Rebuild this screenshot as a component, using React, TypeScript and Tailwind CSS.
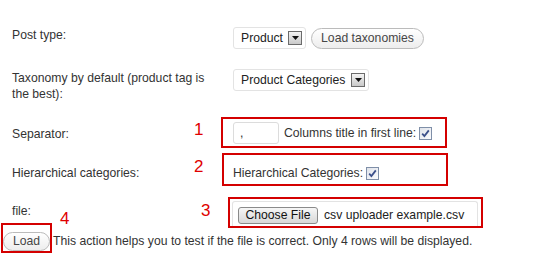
import React from "react";

function SelectBox({ label, width }: { label: string; width: string }) {
    return (
        <div className={`flex items-center justify-between h-[22px] ${width} border border-[#e3e3e3] rounded-[3px] bg-white pl-[7px] pr-[3px]`}>
            <span className="text-[#222] leading-none">{label}</span>
            <span className="flex items-center justify-center w-[14px] h-[14px] border border-[#6b6b6b] bg-gradient-to-b from-[#f4f4f4] to-[#c9c9c9]">
                <svg width="7" height="4" viewBox="0 0 7 4">
                    <path d="M0 0 H7 L3.5 4 Z" fill="#111" />
                </svg>
            </span>
        </div>
    );
}

function CheckBox() {
    return (
        <span className="inline-flex items-center justify-center w-[13px] h-[13px] border border-[#7f8fa8] bg-gradient-to-br from-[#dfe3ea] to-[#fbfbfd]">
            <svg width="9" height="9" viewBox="0 0 9 9">
                <path d="M1.2 4.6 L3.4 7 L7.8 1.4" stroke="#3b4f8a" strokeWidth="1.8" fill="none" />
            </svg>
        </span>
    );
}

function PillButton({ children, className }: { children: React.ReactNode; className?: string }) {
    return (
        <button className={`flex items-center justify-center rounded-full border border-[#bbb] bg-gradient-to-b from-white to-[#ededed] text-[#464646] leading-none ${className ?? ""}`}>
            {children}
        </button>
    );
}

export default function App() {
    return (
        <div className="relative w-[542px] h-[255px] bg-white text-[12.2px] text-[#333] overflow-hidden" style={{ fontFamily: '"Liberation Sans", Arial, sans-serif' }}>
            <div className="flex flex-col pt-[27px]">
                {/* post type */}
                <div className="flex h-[22px]">
                    <div className="w-[233px] pl-[12px] leading-[16px]">Post type:</div>
                    <div className="flex items-center gap-[5px]">
                        <SelectBox label="Product" width="w-[73px]" />
                        <PillButton className="w-[113px] h-[21px]">Load taxonomies</PillButton>
                    </div>
                </div>

                {/* taxonomy */}
                <div className="flex mt-[20px] h-[32px]">
                    <div className="w-[233px] pl-[12px] pt-[1px] leading-[16px] whitespace-nowrap">
                        Taxonomy by default (product tag is<br />the best):
                    </div>
                    <SelectBox label="Product Categories" width="w-[136px]" />
                </div>

                {/* separator */}
                <div className="flex mt-[21px] h-[22px]">
                    <div className="w-[233px] pl-[12px] pt-[4px] leading-[16px]">Separator:</div>
                    <div className="flex items-center">
                        <div className="w-[46px] h-[22px] border border-[#dcdcdc] rounded-[3px] bg-white pl-[6px] leading-[20px]">,</div>
                        <span className="ml-[5px] mr-[3px]">Columns title in first line:</span>
                        <CheckBox />
                    </div>
                </div>

                {/* hierarchical */}
                <div className="flex mt-[21px] h-[16px]">
                    <div className="w-[233px] pl-[12px] leading-[16px]">Hierarchical categories:</div>
                    <div className="flex items-center">
                        <span className="mr-[3px]">Hierarchical Categories:</span>
                        <CheckBox />
                    </div>
                </div>

                {/* file */}
                <div className="flex mt-[20px] h-[27px]">
                    <div className="w-[232px] pl-[12px] pt-[2px] leading-[16px]">file:</div>
                    <div className="flex items-center w-[246px] h-[27px] border border-[#e3e3e3] border-b-0 rounded-t-[3px] pl-[5px]">
                        <button className="h-[17px] w-[80px] border border-[#8a8a8a] rounded-[3px] bg-gradient-to-b from-[#f6f6f6] to-[#d8d8d8] text-[#111] text-[12.2px] leading-none">
                            Choose File
                        </button>
                        <span className="ml-[6px] text-[#222]">csv uploader example.csv</span>
                    </div>
                </div>

                {/* load */}
                <div className="flex items-center mt-[4px] h-[19px] pl-[3px]">
                    <PillButton className="w-[47px] h-[19px]">Load</PillButton>
                    <span className="ml-[3px] whitespace-nowrap">This action helps you to test if the file is correct. Only 4 rows will be displayed.</span>
                </div>
            </div>

            {/* annotations */}
            <div className="absolute left-[221px] top-[117px] w-[226px] h-[31px] border-2 border-[#d40000]" />
            <div className="absolute left-[222px] top-[153px] w-[226px] h-[33px] border-2 border-[#d40000]" />
            <div className="absolute left-[228px] top-[197px] w-[255px] h-[31px] border-2 border-[#d40000]" />
            <div className="absolute left-[1px] top-[223px] w-[51px] h-[30px] border-2 border-[#d40000]" />
            <span className="absolute left-[194px] top-[121px] text-[17px] leading-[18px] text-[#e00000]">1</span>
            <span className="absolute left-[194px] top-[158px] text-[17px] leading-[18px] text-[#e00000]">2</span>
            <span className="absolute left-[201px] top-[202px] text-[17px] leading-[18px] text-[#e00000]">3</span>
            <span className="absolute left-[60px] top-[210px] text-[17px] leading-[18px] text-[#e00000]">4</span>
        </div>
    );
}
